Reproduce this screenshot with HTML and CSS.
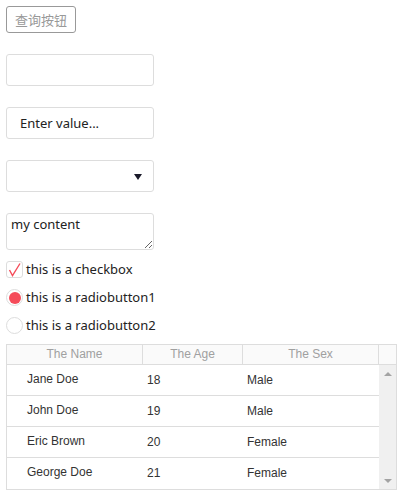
FILE: index.html
```html
<!DOCTYPE html>
<html>
<head>
<meta charset="utf-8">
<link rel="stylesheet" href="styles.css">
</head>
<body>
<div class="page">
  <button class="btn">查询按钮</button>
  <input class="field first" type="text">
  <input class="field" type="text" placeholder="Enter value...">
  <div class="select"><span class="arrow"></span></div>
  <textarea class="area">my content</textarea>
  <div class="choice check-row">
    <span class="box"><svg width="17" height="17" viewBox="0 0 17 17"><polyline points="3.5,9 6.5,14.5 14,2.5" fill="none" stroke="#f54c5a" stroke-width="1.4"/></svg></span>
    <span>this is a checkbox</span>
  </div>
  <div class="choice">
    <span class="radio on"><span class="dot"></span></span>
    <span>this is a radiobutton1</span>
  </div>
  <div class="choice">
    <span class="radio"></span>
    <span>this is a radiobutton2</span>
  </div>
  <div class="table">
    <div class="head">
      <div class="hc">The Name</div>
      <div class="hc">The Age</div>
      <div class="hc">The Sex</div>
      <div class="hc last"></div>
    </div>
    <div class="body">
      <div class="rows">
        <div class="row"><div class="c name">Jane Doe</div><div class="c">18</div><div class="c">Male</div></div>
        <div class="row"><div class="c name">John Doe</div><div class="c">19</div><div class="c">Male</div></div>
        <div class="row"><div class="c name">Eric Brown</div><div class="c">20</div><div class="c">Female</div></div>
        <div class="row"><div class="c name">George Doe</div><div class="c">21</div><div class="c">Female</div></div>
      </div>
      <div class="scroll">
        <span class="up"></span>
        <span class="down"></span>
      </div>
    </div>
  </div>
</div>
</body>
</html>
```

FILE: styles.css
```css
html, body { margin: 0; padding: 0; background: #fff; }
body {
  padding: 6px;
  font-family: "Noto Sans", "Open Sans", "Noto Sans CJK SC", sans-serif;
  font-size: 13px;
  color: #222;
}
.page { display: flex; flex-direction: column; align-items: flex-start; }
.btn {
  box-sizing: border-box;
  width: 70px; height: 27px;
  border: 1px solid #999;
  border-radius: 3px;
  background: #fff;
  color: #999;
  font-family: "Noto Sans CJK SC", sans-serif;
  font-size: 13px;
  padding: 0;
}
.field {
  box-sizing: border-box;
  width: 148px; height: 32px;
  margin-top: 21px;
  border: 1px solid #ddd;
  border-radius: 3px;
  padding: 0 0 0 13px;
  font-family: "Noto Sans", sans-serif;
  font-size: 13px;
  outline: none;
}
.field::placeholder { color: #222; }
.select {
  box-sizing: border-box;
  width: 148px; height: 32px;
  margin-top: 21px;
  border: 1px solid #ddd;
  border-radius: 3px;
  position: relative;
}
.arrow {
  position: absolute;
  left: 127px; top: 13px;
  width: 0; height: 0;
  border-left: 4px solid transparent;
  border-right: 4px solid transparent;
  border-top: 6px solid #1a1a2a;
}
.area {
  box-sizing: border-box;
  width: 148px; height: 37px;
  margin: 21px 0 0 0;
  border: 1px solid #ddd;
  border-radius: 3px;
  padding: 2px 4px;
  font-family: "Noto Sans", sans-serif;
  font-size: 13px;
  line-height: 17px;
  color: #222;
  resize: both;
  outline: none;
}
.choice {
  display: flex; align-items: center;
  height: 17px;
  margin-top: 11px;
  gap: 3px;
  line-height: 17px;
}
.check-row { margin-top: 11px; }
.choice + .choice { margin-top: 11px; }
.box {
  box-sizing: border-box;
  width: 17px; height: 17px;
  border: 1px solid #ddd;
  border-radius: 3px;
  display: flex;
}
.box svg { margin: -1px; }
.radio {
  box-sizing: border-box;
  width: 17px; height: 17px;
  border: 1px solid #ddd;
  border-radius: 50%;
  display: flex; align-items: center; justify-content: center;
}
.dot { width: 12px; height: 12px; border-radius: 50%; background: #f54c5a; }
.table {
  box-sizing: border-box;
  width: 391px;
  margin-top: 10px;
  border: 1px solid #ddd;
  font-family: "Liberation Sans", Arial, sans-serif;
  font-size: 12px;
}
.head {
  display: grid;
  grid-template-columns: 136px 100px 136px 17px;
  height: 19px;
  background: #fafafa;
  border-bottom: 1px solid #ddd;
}
.hc {
  color: #a0a0a0;
  text-align: center;
  line-height: 19px;
  border-right: 1px solid #ddd;
}
.hc.last { border-right: none; }
.body { display: flex; }
.rows { width: 372px; }
.row {
  display: grid;
  grid-template-columns: 136px 100px 136px;
  height: 30px;
  border-bottom: 1px solid #ddd;
}
.row:last-child { border-bottom: none; height: 31px; }
.c { padding-left: 4px; line-height: 30px; color: #333; }
.c.name { padding-left: 20px; line-height: 28px; }
.scroll {
  width: 17px;
  background: #f0f0f0;
  display: flex; flex-direction: column; justify-content: space-between; align-items: center;
  padding: 7px 0 6px;
}
.up {
  width: 0; height: 0;
  border-left: 4px solid transparent;
  border-right: 4px solid transparent;
  border-bottom: 4px solid #a3a3a3;
}
.down {
  width: 0; height: 0;
  border-left: 4px solid transparent;
  border-right: 4px solid transparent;
  border-top: 4px solid #a3a3a3;
}
```
